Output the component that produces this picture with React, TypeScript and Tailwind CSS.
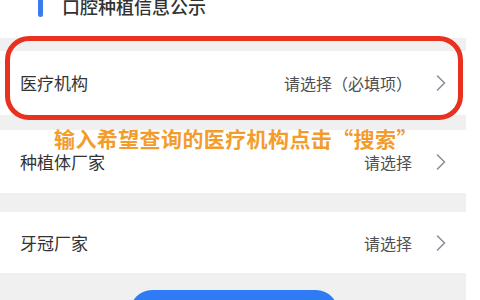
import React from "react"

const font = { fontFamily: '"Noto Sans CJK SC", "Noto Sans", sans-serif' }

function Chevron() {
  return (
    <svg width="10" height="16" viewBox="0 0 10 16" fill="none" className="shrink-0">
      <path d="M1.5 1 L8.5 8 L1.5 15" stroke="#8a9099" strokeWidth="1.6" strokeLinecap="round" strokeLinejoin="round" />
    </svg>
  )
}

function Row({ label, value, h, mt }: { label: string; value: string; h: string; mt: string }) {
  return (
    <div className={`${h} ${mt} bg-white flex items-center justify-between pl-[20px] pr-[20px]`}>
      <span className="text-[17px] leading-[22px] text-[#333333]">{label}</span>
      <div className="flex items-center">
        <span className="text-[16px] leading-[22px] text-[#505050] mr-[24px]">{value}</span>
        <Chevron />
      </div>
    </div>
  )
}

export default function App() {
  return (
    <div className="relative w-[480px] h-[300px] overflow-hidden bg-white" style={font}>
      <div className="w-[466px] h-[300px] bg-[#f0f0f0]">
        {/* Header */}
        <div className="h-[38px] bg-white flex items-start">
          <div className="ml-[38px] w-[5px] h-[17px] rounded-b-full bg-[#3a7bf0]" />
          <span className="ml-[19px] -mt-[4px] text-[18px] leading-[20px] font-medium text-[#333333]">口腔种植信息公示</span>
        </div>

        <Row label="医疗机构" value="请选择（必填项）" h="h-[64px]" mt="mt-[13px]" />
        <Row label="种植体厂家" value="请选择" h="h-[63px]" mt="mt-[15px]" />
        <Row label="牙冠厂家" value="请选择" h="h-[61px]" mt="mt-[19px]" />

        <div className="mt-[17px] ml-[130px] w-[208px] h-[44px] rounded-full bg-[#2f7bf5]" />
      </div>

      {/* annotation ring */}
      <div className="absolute left-[5px] top-[36px] w-[458px] h-[84px] border-[5px] border-[#e8321f] rounded-[24px]" />
      <div className="absolute left-[54px] top-[127px] text-[21px] leading-[22px] font-bold tracking-[0.4px] text-[#f39c2c] whitespace-nowrap">
        输入希望查询的医疗机构点击“搜索”
      </div>
    </div>
  )
}
